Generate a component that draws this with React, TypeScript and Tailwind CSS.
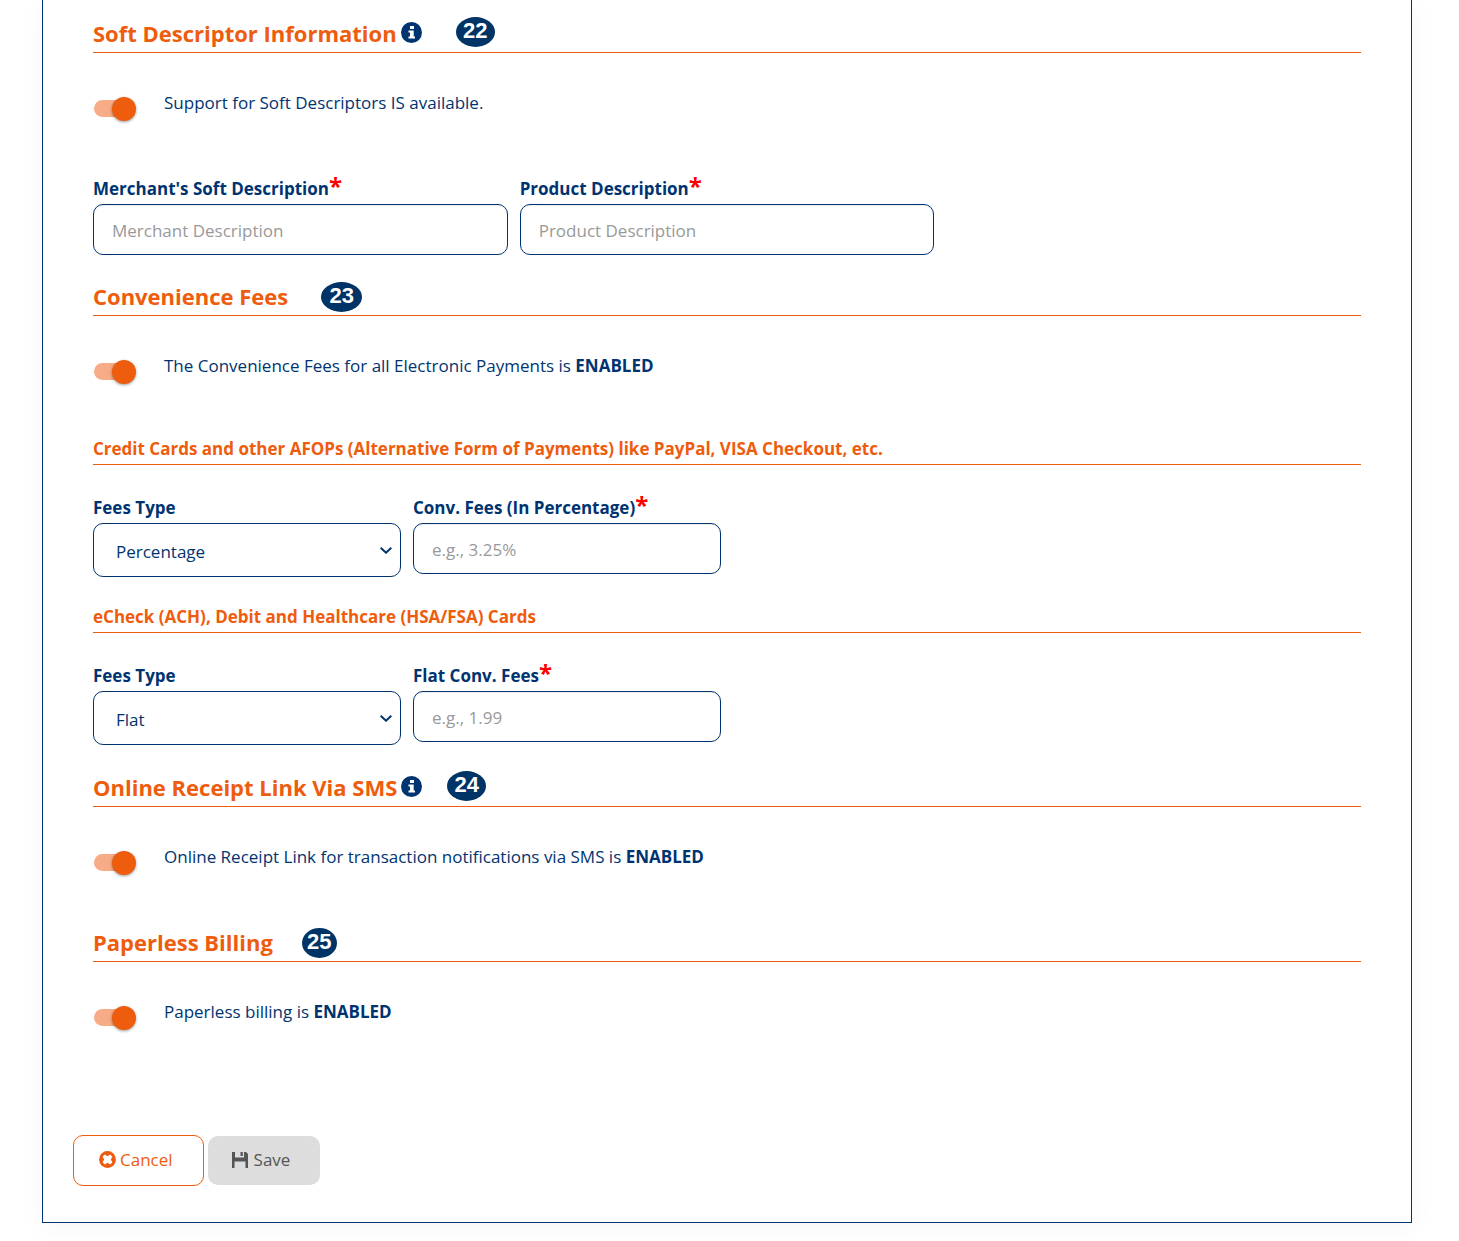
import { useState } from 'react';
import type { ReactNode } from 'react';

const FEES_TYPES = ['Percentage', 'Flat'];

const fieldClass =
  'w-full h-[51px] px-[18px] pt-0.5 rounded-[10px] border border-[#003471] bg-white shadow-[inset_0_1px_1px_rgba(0,0,0,0.075)] placeholder:text-[#999999] focus:outline-none focus:ring-1 focus:ring-[#003471]';

function InfoIcon() {
  return (
    <svg viewBox="0 0 21 21" className="ml-1 h-[21px] w-[21px] shrink-0" aria-hidden="true">
      <circle cx="10.5" cy="10.5" r="10.5" fill="#003471" />
      <rect x="9" y="4" width="4" height="3" fill="#fff" />
      <path d="M7.5 8.5H12.7V14.5H14V16.5H7.5V14.5H9V10.5H7.5Z" fill="#fff" />
    </svg>
  );
}

function CancelIcon() {
  return (
    <svg viewBox="0 0 17 17" className="h-[17px] w-[17px]" aria-hidden="true">
      <circle cx="8.5" cy="8.5" r="8.4" fill="#ee5c0d" />
      <path
        d="M5.8 3.6L8.5 5.2L11.2 3.6L13.4 5.8L11.8 8.5L13.4 11.2L11.2 13.4L8.5 11.8L5.8 13.4L3.6 11.2L5.2 8.5L3.6 5.8Z"
        fill="#fff"
      />
    </svg>
  );
}

function SaveIcon() {
  return (
    <svg viewBox="0 0 16 16" className="h-4 w-4" fill="#555555" aria-hidden="true">
      <path d="M0 0H3V5.5H12V0H14L16 2V16H13.5V9.5H2.5V16H0Z" />
      <path d="M8.5 0H10.8V4H8.5Z" />
    </svg>
  );
}

type SectionHeadingProps = {
  title: string;
  step: number;
  info?: boolean;
  badgeClass: string;
};

function SectionHeading({ title, step, info, badgeClass }: SectionHeadingProps) {
  return (
    <div className="flex items-center border-b border-[#ee5c0d] pb-0.5">
      <h2 className="pb-0.5 text-[22px] leading-[30px] font-bold text-[#ee5c0d]">{title}</h2>
      <div className={info ? 'flex items-center pb-[3px]' : 'flex items-center'}>
        {info && <InfoIcon />}
        <span
          className={`flex h-[30px] items-center justify-center rounded-[50%] bg-[#003366] pb-0.5 font-['Liberation_Sans'] text-[22px] leading-none font-bold text-white ${badgeClass}`}
        >
          {step}
        </span>
      </div>
    </div>
  );
}

function ToggleRow({ id, children }: { id: string; children: ReactNode }) {
  const [checked, setChecked] = useState(true);

  return (
    <div className="mt-[38px] flex items-start">
      <input
        id={id}
        type="checkbox"
        role="switch"
        checked={checked}
        onChange={(e) => setChecked(e.target.checked)}
        className="relative mt-[9px] ml-px h-[17px] w-9 shrink-0 cursor-pointer appearance-none rounded-full bg-gray-300 before:absolute before:-top-[3px] before:-left-1 before:h-6 before:w-6 before:rounded-full before:bg-white before:shadow-[0_1px_3px_rgba(0,0,0,0.4)] before:content-[''] checked:bg-[#f7ab86] checked:before:left-[18px] checked:before:bg-[#ee5c0d]"
      />
      <label htmlFor={id} className="ml-[34px]">
        {children}
      </label>
    </div>
  );
}

function FieldLabel({ htmlFor, required, children }: { htmlFor: string; required?: boolean; children: ReactNode }) {
  return (
    <label htmlFor={htmlFor} className="mb-[3px] flex h-6 font-bold">
      {children}
      {required && <span className="text-2xl leading-[18px] text-[#ff0000]">*</span>}
    </label>
  );
}

function TextField({ id, label, placeholder }: { id: string; label: string; placeholder: string }) {
  return (
    <div>
      <FieldLabel htmlFor={id} required>
        {label}
      </FieldLabel>
      <input id={id} name={id} type="text" placeholder={placeholder} className={fieldClass} />
    </div>
  );
}

function FeesTypeSelect({ id, initial }: { id: string; initial: string }) {
  const [value, setValue] = useState(initial);

  return (
    <div>
      <FieldLabel htmlFor={id}>Fees Type</FieldLabel>
      <div className="relative">
        <select
          id={id}
          name={id}
          value={value}
          onChange={(e) => setValue(e.target.value)}
          className="block h-[54px] w-full appearance-none rounded-[10px] border border-[#003471] bg-white px-[22px] pt-[3px]"
        >
          {FEES_TYPES.map((type) => (
            <option key={type} value={type}>
              {type}
            </option>
          ))}
        </select>
        <svg
          viewBox="0 0 12 8"
          className="pointer-events-none absolute inset-y-0 right-[9px] my-auto h-2 w-3"
          fill="none"
          stroke="#003471"
          strokeWidth="2"
          aria-hidden="true"
        >
          <path d="M0.7 1.7L6 6.7L11.3 1.7" />
        </svg>
      </div>
    </div>
  );
}

function SubHeading({ children }: { children: ReactNode }) {
  return <h3 className="border-b border-[#ee5c0d] pb-[3px] font-bold text-[#ee5c0d]">{children}</h3>;
}

export default function App() {
  return (
    <div className="bg-white pr-[47px] pb-[18px] pl-[42px] font-['Open_Sans',sans-serif] text-[17px] leading-6 text-[#003471]">
      <form
        onSubmit={(e) => e.preventDefault()}
        className="border-x border-b border-[#003471] bg-white pt-[17px] pb-9 shadow-[0_5px_25px_rgba(0,0,0,0.04)]"
      >
        <div className="px-[50px]">
          <section>
            <SectionHeading title="Soft Descriptor Information" step={22} info badgeClass="ml-[34px] w-[39px]" />
            <ToggleRow id="softDescriptors">Support for Soft Descriptors IS available.</ToggleRow>
            <div className="mt-[60px] grid grid-cols-3 gap-3">
              <TextField id="merchantDescription" label="Merchant's Soft Description" placeholder="Merchant Description" />
              <TextField id="productDescription" label="Product Description" placeholder="Product Description" />
            </div>
          </section>

          <section className="mt-[26px]">
            <SectionHeading title="Convenience Fees" step={23} badgeClass="ml-[33px] w-[41px]" />
            <ToggleRow id="convenienceFees">
              The Convenience Fees for all Electronic Payments is <b>ENABLED</b>
            </ToggleRow>

            <div className="mt-[57px]">
              <SubHeading>
                Credit Cards and other AFOPs (Alternative Form of Payments) like PayPal, VISA Checkout, etc.
              </SubHeading>
              <div className="mt-[31px] grid grid-cols-4 gap-3">
                <FeesTypeSelect id="cardFeesType" initial="Percentage" />
                <TextField id="cardFees" label="Conv. Fees (In Percentage)" placeholder="e.g., 3.25%" />
              </div>
            </div>

            <div className="mt-7">
              <SubHeading>eCheck (ACH), Debit and Healthcare (HSA/FSA) Cards</SubHeading>
              <div className="mt-[31px] grid grid-cols-4 gap-3">
                <FeesTypeSelect id="echeckFeesType" initial="Flat" />
                <TextField id="echeckFees" label="Flat Conv. Fees" placeholder="e.g., 1.99" />
              </div>
            </div>
          </section>

          <section className="mt-[26px]">
            <SectionHeading title="Online Receipt Link Via SMS" step={24} info badgeClass="ml-[25px] w-[39px]" />
            <ToggleRow id="receiptLink">
              Online Receipt Link for transaction notifications via SMS is <b>ENABLED</b>
            </ToggleRow>
          </section>

          <section className="mt-14">
            <SectionHeading title="Paperless Billing" step={25} badgeClass="ml-[29px] w-[35px]" />
            <ToggleRow id="paperlessBilling">
              Paperless billing is <b>ENABLED</b>
            </ToggleRow>
          </section>
        </div>

        <div className="mt-[109px] flex items-center gap-1 px-[30px]">
          <button
            type="button"
            className="flex h-[51px] items-center gap-1 rounded-[10px] border border-[#ee5c0d] bg-white pr-[30px] pb-0.5 pl-[25px] text-[#ee5c0d]"
          >
            <CancelIcon />
            Cancel
          </button>
          <button
            type="submit"
            disabled
            className="flex h-[49px] items-center gap-1.5 rounded-[10px] bg-[#dddddd] pr-[30px] pb-0.5 pl-6 text-[#555555]"
          >
            <SaveIcon />
            Save
          </button>
        </div>
      </form>
    </div>
  );
}
